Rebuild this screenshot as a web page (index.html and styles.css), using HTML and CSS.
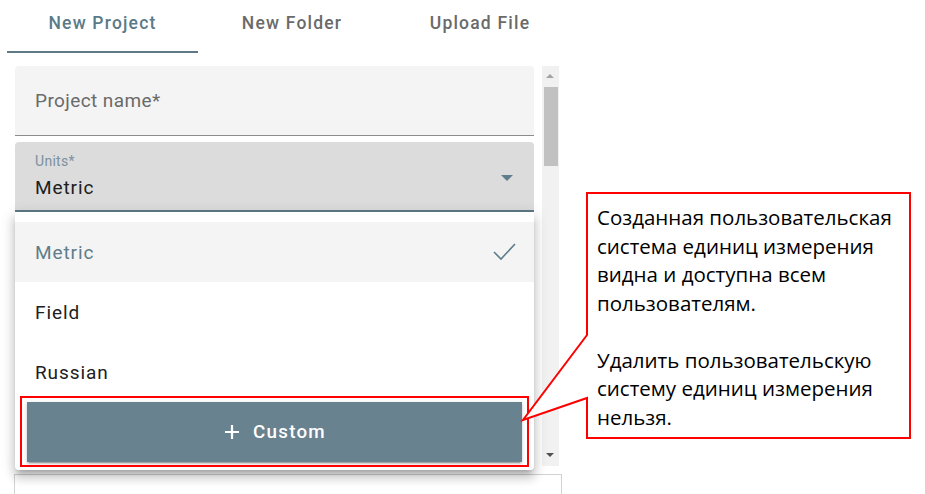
FILE: index.html
```html
<!DOCTYPE html>
<html lang="en">

<head>
  <meta charset="UTF-8">
  <meta name="viewport" content="width=device-width, initial-scale=1">
  <title>New Project</title>
  <link rel="stylesheet" href="styles.css">
</head>

<body>
  <div class="page">
    <div class="tabs">
      <div class="tab active">New Project</div>
      <div class="tab">New Folder</div>
      <div class="tab">Upload File</div>
    </div>

    <div class="scroll-area">
      <div class="fields">
        <div class="field">
          <span class="placeholder">Project name*</span>
        </div>
        <div class="field select focused">
          <span class="float-label">Units*</span>
          <span class="value">Metric</span>
          <span class="arrow"></span>
        </div>
      </div>
      <div class="scrollbar">
        <span class="sb-up"></span>
        <span class="sb-thumb"></span>
        <span class="sb-down"></span>
      </div>
    </div>
    <div class="next-field"></div>

    <!-- open dropdown of the Units select -->
    <div class="options">
      <div class="option selected">
        <span>Metric</span>
        <svg class="check" width="24" height="20" viewBox="0 0 24 20">
          <polyline points="2,10 9,17 23,2" fill="none" stroke="#5f7d8a" stroke-width="1.6" />
        </svg>
      </div>
      <div class="option">Field</div>
      <div class="option">Russian</div>
      <button class="custom-btn">
        <svg class="plus" width="14" height="14" viewBox="0 0 14 14">
          <path d="M7 0 V14 M0 7 H14" stroke="#fff" stroke-width="2.2" />
        </svg>Custom
      </button>
    </div>

    <!-- annotation -->
    <div class="highlight"></div>
    <svg class="callout-shape" width="925" height="494" viewBox="0 0 925 494">
      <path d="M587 335 L587 193 L910 193 L910 438 L587 438 L587 398 L523 420 Z" fill="#fff" stroke="#ff0000"
        stroke-width="2" />
    </svg>
    <div class="callout-text">
      <p>Созданная пользовательская система единиц измерения видна и доступна всем пользователям.</p>
      <p>Удалить пользовательскую систему единиц измерения нельзя.</p>
    </div>
  </div>
</body>

</html>
```

FILE: styles.css
```css
* {
  box-sizing: border-box;
}

body {
  margin: 0;
  background: #fff;
  font-family: Roboto, "Liberation Sans", sans-serif;
}

.page {
  position: relative;
  width: 925px;
  height: 494px;
  overflow: hidden;
}

.tabs {
  display: flex;
  padding-left: 7px;
  height: 53px;
}

.tab {
  width: 188px;
  height: 53px;
  line-height: 46px;
  text-align: center;
  font-size: 17.5px;
  font-weight: 500;
  letter-spacing: 1.2px;
  color: #6a6a6a;
}

.tab.active {
  width: 191px;
  color: #5b7a88;
  border-bottom: 2px solid #5f7a86;
}

.scroll-area {
  display: flex;
  margin-top: 13px;
  padding-left: 15px;
  height: 400px;
}

.fields {
  width: 519px;
}

.field {
  position: relative;
  height: 70px;
  background: #f4f4f4;
  border-radius: 4px 4px 0 0;
  border-bottom: 1px solid #8c8c8c;
  padding-left: 20px;
}

.placeholder {
  display: block;
  padding-top: 23px;
  font-size: 19px;
  letter-spacing: 0.4px;
  color: #6a6a6a;
}

.select {
  margin-top: 6px;
}

.select.focused {
  background: #dcdcdc;
  border-bottom: 2px solid #5f7a86;
}

.float-label {
  display: block;
  padding-top: 11px;
  font-size: 14px;
  letter-spacing: 0.3px;
  color: #7b919c;
}

.value {
  display: block;
  margin-top: 7px;
  font-size: 19px;
  letter-spacing: 0.9px;
  color: #202020;
}

.arrow {
  position: absolute;
  right: 21px;
  top: 33px;
  border-left: 6px solid transparent;
  border-right: 6px solid transparent;
  border-top: 6px solid #5f7d8a;
}

.scrollbar {
  position: relative;
  width: 17px;
  margin-left: 8px;
  background: #f1f1f1;
}

.sb-thumb {
  position: absolute;
  left: 2px;
  right: 1px;
  top: 21px;
  height: 79px;
  background: #c1c1c1;
}

.sb-up,
.sb-down {
  position: absolute;
  left: 4px;
  border-left: 4px solid transparent;
  border-right: 4px solid transparent;
}

.sb-up {
  top: 8px;
  border-bottom: 4px solid #a3a3a3;
}

.sb-down {
  bottom: 9px;
  border-top: 4px solid #505050;
}

.next-field {
  margin: 8px 0 0 14px;
  width: 548px;
  height: 30px;
  border: 1px solid #d2d2d2;
  border-bottom: none;
}

.options {
  position: absolute;
  left: 15px;
  top: 212px;
  width: 519px;
  height: 258px;
  padding-top: 10px;
  background: #fff;
  border-radius: 0 0 4px 4px;
  box-shadow: 0 5px 5px -3px rgba(0, 0, 0, 0.2), 0 8px 10px 1px rgba(0, 0, 0, 0.14), 0 3px 14px 2px rgba(0, 0, 0, 0.12);
}

.option {
  display: flex;
  align-items: center;
  justify-content: space-between;
  height: 60px;
  padding: 0 18px 0 20px;
  font-size: 19px;
  letter-spacing: 0.9px;
  color: #202020;
}

.option.selected {
  background: #f4f4f4;
  color: #5f7d8a;
}

.custom-btn {
  display: flex;
  align-items: center;
  justify-content: center;
  width: 495px;
  height: 60px;
  margin: 0 12px;
  padding: 0 0 0 2px;
  border: none;
  background: #68828f;
  color: #fff;
  font-family: Roboto, "Liberation Sans", sans-serif;
  font-size: 18.8px;
  font-weight: 500;
  letter-spacing: 1.25px;
  box-shadow: 0 3px 1px -2px rgba(0, 0, 0, 0.2), 0 2px 2px 0 rgba(0, 0, 0, 0.14), 0 1px 5px 0 rgba(0, 0, 0, 0.12);
}

.plus {
  margin-right: 14px;
}

.highlight {
  position: absolute;
  left: 20px;
  top: 396px;
  width: 509px;
  height: 71px;
  border: 2px solid #ff0000;
}

.callout-shape {
  position: absolute;
  left: 0;
  top: 0;
}

.callout-text {
  position: absolute;
  left: 597px;
  top: 203px;
  width: 310px;
  font-family: "Open Sans", "Liberation Sans", sans-serif;
  font-size: 20.5px;
  line-height: 28.5px;
  color: #000;
}

.callout-text p {
  margin: 0 0 28.5px;
}
```
